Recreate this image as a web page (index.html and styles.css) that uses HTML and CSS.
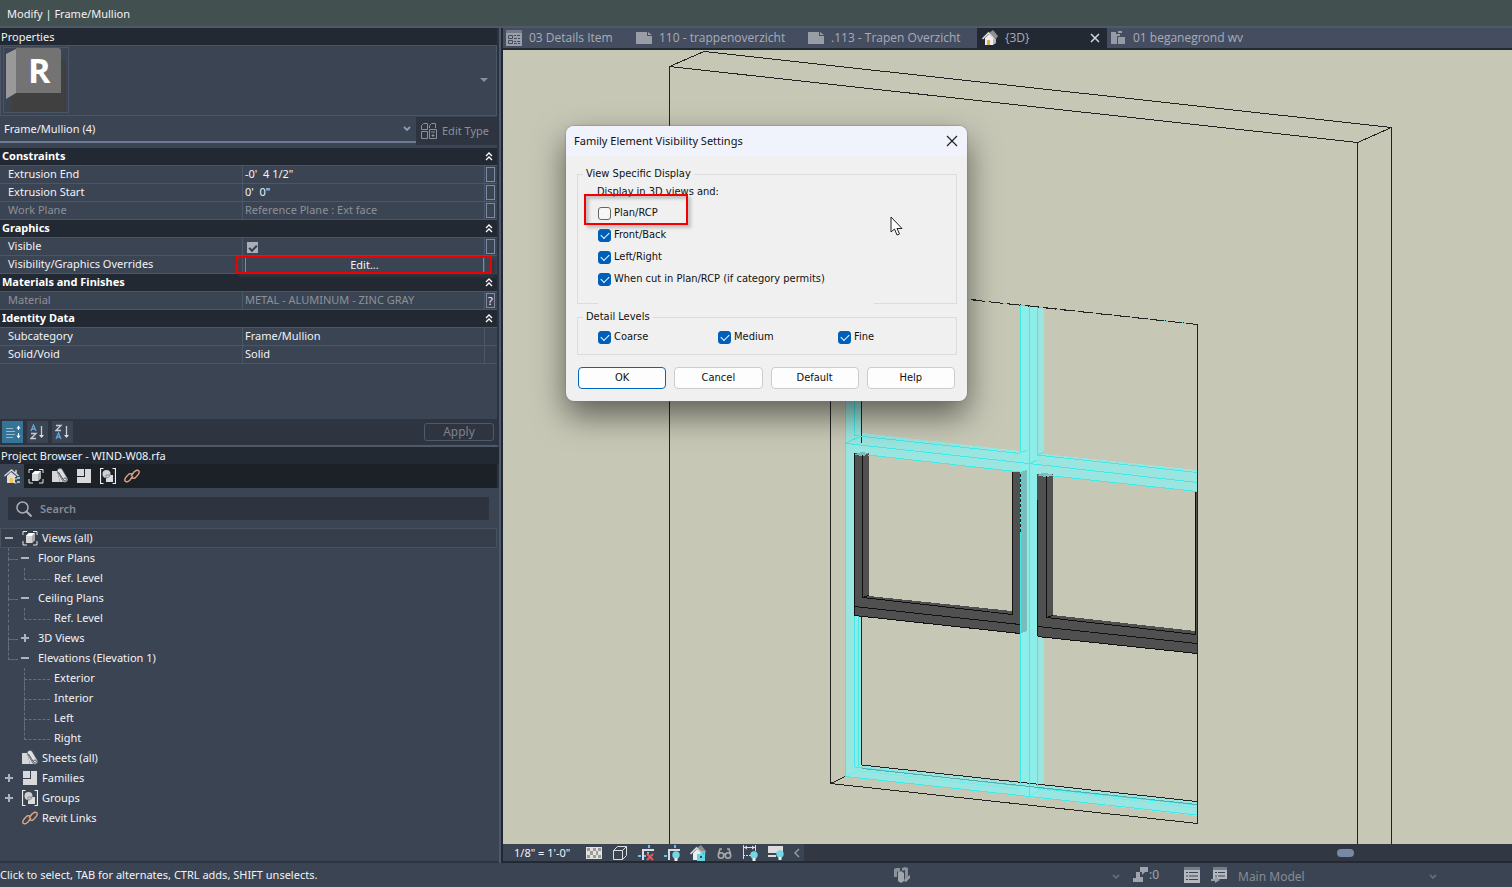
FILE: index.html
```html
<!DOCTYPE html>
<html lang="en">
<head>
<meta charset="utf-8">
<title>Modify | Frame/Mullion</title>
<link rel="stylesheet" href="styles.css">
</head>
<body>
<svg class="defs" aria-hidden="true">
  <symbol id="i-views" viewBox="0 0 16 16"><path d="M1 5V1.500h4M11 1.500h4V5M15 11v4h-4M5 15H1v-4" fill="none" stroke="#e6e6e6"/><path d="M4 5.500 7 3h6v7l-3 3H4z" fill="#d2d3d5"/><path d="M4 6 7 3h6l-3 3z" fill="#fff"/><path d="m10 6 3-3v7l-3 3z" fill="#a9abb0"/></symbol>
  <symbol id="i-sheets" viewBox="0 0 16 16"><path d="M0 3h5l3 11H0z" fill="#d6d6d8"/><path d="M5 3l3 11h5z" fill="#d6d6d8"/><path d="m8 3 5 8.500" stroke="#59626f" stroke-width="6" stroke-linecap="round"/><path d="m8 3 5 8.500" stroke="#dedede" stroke-width="4.500" stroke-linecap="round"/><path d="m6.500 4 5 8" stroke="#505966"/><circle cx="13" cy="11.500" r="1.500" fill="none" stroke="#555e6a"/></symbol>
  <symbol id="i-families" viewBox="0 0 16 16"><path d="M1 1h7v7H1zM9 1h6v14H1V9h8z" fill="#d9d9da"/></symbol>
  <symbol id="i-groups" viewBox="0 0 16 16"><path d="M3.500.5h-3v15h3M12.500.5h3v15h-3" fill="none" stroke="#eee" stroke-width="1.200"/><path d="M6 7h7v7H6z" fill="#dcdcdc"/><circle cx="6.500" cy="6" r="4" fill="#cfd0d2"/><path d="M6 7h4q0 2-3 3H6z" fill="none" stroke="#858c97"/></symbol>
  <symbol id="i-link" viewBox="0 0 16 16"><g fill="none" stroke="#d9a583" stroke-width="1.400"><path d="m7 8 3-4q3-3 5-1 1 2-2 5l-2 2q-2 1-4-.5"/><path d="m9 8-3 4q-3 3-5 1-1-2 2-5l2-2q2-1 4 .5"/></g></symbol>
  <symbol id="i-sheet" viewBox="0 0 16 12"><path d="M0 0h11v4h5v8H0zM12 0l4 3h-4z" fill="#999da6"/></symbol>
  <symbol id="i-house" viewBox="0 0 16 16"><path d="M3 8v7h8V8L7 4z" fill="#eee"/><path d="m11 8 3 1v4l-3 2z" fill="#b8b8b8"/><path d="m7 3 4-3 5 6-2 3-4-3z" fill="#8e8e8e"/><path d="m.5 9 6-6 6 6" fill="none" stroke="#d8d8d8" stroke-width="1.600"/></symbol>
  <symbol id="i-chev" viewBox="0 0 8 6"><path d="m1 1 3 3 3-3" fill="none" stroke="currentColor" stroke-width="1.800"/></symbol>
  <symbol id="i-up2" viewBox="0 0 8 10"><path d="m1 5 3-3 3 3M1 9l3-3 3 3" fill="none" stroke="#fff" stroke-width="1.300"/></symbol>
  <symbol id="i-bulb" viewBox="0 0 8 10"><circle cx="4" cy="4" r="3.700" fill="#72d7e6"/><path d="M2.500 7h3v3h-3z" fill="#eee"/></symbol>
</svg>

<header class="modebar">Modify | Frame/Mullion</header>

<main class="workspace">
  <aside class="side">
    <section class="properties">
      <h2 class="palette-title">Properties</h2>
      <div class="type-box">
        <svg class="type-logo" width="66" height="66" viewBox="0 0 66 66" aria-label="R">
          <rect x=".5" y=".5" width="65" height="65" fill="none" stroke="#4a5566"/>
          <path d="M9 12h54v53H9z" fill="#404040"/>
          <path d="M13 2v44L3 52V7z" fill="#999"/>
          <path d="M13 1h42q3 0 3 3v42H13z" fill="#737373"/>
          <text x="25" y="36" class="logo-letter">R</text>
        </svg>
        <svg class="drop-arrow" width="8" height="5"><path d="M0 0h8L4 4z" fill="#7f91a8"/></svg>
      </div>
      <div class="filter">
        <button class="combo"><span>Frame/Mullion (4)</span><svg width="8" height="6"><use href="#i-chev"/></svg></button>
        <button class="edit-type"><svg width="16" height="16" viewBox="0 0 16 16" fill="none" stroke="#8c9199"><path d="M.5 6.500v-4l2-2h4v6zM8.500 5V2.500l2-2h4V5M.5 15.500v-7h6v7zM8.500 6.500h7v9h-7zM10 9h4M12 11v3M10.500 12.500h3"/></svg><span>Edit Type</span></button>
      </div>
      <table class="props">
        <colgroup><col class="c-name"><col><col class="c-btn"></colgroup>
        <tbody>
          <tr class="group"><th colspan="2">Constraints</th><td><button aria-label="Collapse"><svg width="8" height="10"><use href="#i-up2"/></svg></button></td></tr>
          <tr><th>Extrusion End</th><td>-0'&nbsp; 4 1/2"</td><td><button class="assoc" aria-label="Associate"></button></td></tr>
          <tr><th>Extrusion Start</th><td>0'&nbsp; 0"</td><td><button class="assoc" aria-label="Associate"></button></td></tr>
          <tr class="off"><th>Work Plane</th><td>Reference Plane : Ext face</td><td><button class="assoc" aria-label="Associate"></button></td></tr>
          <tr class="group"><th colspan="2">Graphics</th><td><button aria-label="Collapse"><svg width="8" height="10"><use href="#i-up2"/></svg></button></td></tr>
          <tr><th><label for="visible">Visible</label></th><td><input type="checkbox" id="visible" class="tick" checked></td><td><button class="assoc" aria-label="Associate"></button></td></tr>
          <tr><th>Visibility/Graphics Overrides</th><td class="marked"><button class="edit">Edit...</button></td><td></td></tr>
          <tr class="group"><th colspan="2">Materials and Finishes</th><td><button aria-label="Collapse"><svg width="8" height="10"><use href="#i-up2"/></svg></button></td></tr>
          <tr class="off"><th>Material</th><td>METAL - ALUMINUM - ZINC GRAY</td><td><button class="assoc">?</button></td></tr>
          <tr class="group"><th colspan="2">Identity Data</th><td><button aria-label="Collapse"><svg width="8" height="10"><use href="#i-up2"/></svg></button></td></tr>
          <tr><th>Subcategory</th><td>Frame/Mullion</td><td></td></tr>
          <tr><th>Solid/Void</th><td>Solid</td><td></td></tr>
        </tbody>
      </table>
      <div class="sortbar">
        <button class="sort on" aria-label="Group"><svg width="16" height="16" viewBox="0 0 16 16"><path d="M1 4.500h7M1 7.500h9M1 10.500h9M1 13.500h7" stroke="#9ab8cb"/><path d="M13.500 2v4M13.500 9v5" stroke="#fff"/><path d="m11.500 4.500 2-3 2 3zM11.500 11.500l2 3 2-3z" fill="#fff"/></svg></button>
        <button class="sort" aria-label="Sort ascending"><svg width="16" height="16" viewBox="0 0 16 16" fill="none"><path d="m1 7 2.500-6L6 7M2 5h3" stroke="#65a5d6" stroke-width="1.300"/><path d="M1 9.500h5L1 14.500h5M11.500 2v11" stroke="#c8ccd2" stroke-width="1.300"/><path d="m9 11 2.500 3 2.500-3z" fill="#ddd"/></svg></button>
        <button class="sort" aria-label="Sort descending"><svg width="16" height="16" viewBox="0 0 16 16" fill="none"><path d="M1 1.500h5L1 6.500h5M11.500 2v11" stroke="#c8ccd2" stroke-width="1.300"/><path d="m1 15 2.500-6L6 15M2 13h3" stroke="#65a5d6" stroke-width="1.300"/><path d="m9 11 2.500 3 2.500-3z" fill="#ddd"/></svg></button>
        <button class="apply" disabled>Apply</button>
      </div>
    </section>

    <section class="browser">
      <h2 class="palette-title">Project Browser - WIND-W08.rfa</h2>
      <nav class="iconbar">
        <button class="on" aria-label="Home"><svg width="16" height="16" viewBox="0 0 16 16"><path d="M3 8v7h9V8L7 4z" fill="#ddd"/><path d="m.5 8 7-6 7 6M12 2v4" fill="none" stroke="#d8d8d8" stroke-width="1.500"/><path d="M6 10h3v5H6z" fill="#f2c65a"/><path d="M10 9v7h6V9z" fill="#3b4453"/><path d="M10.500 9v6h2M11 11h2" stroke="#ddd" fill="none"/><path d="M13 9h3v2h-3zM13 13h3v2h-3z" fill="#72c7f2"/></svg></button>
        <button aria-label="Views"><svg width="16" height="16"><use href="#i-views"/></svg></button>
        <button aria-label="Sheets"><svg width="16" height="16"><use href="#i-sheets"/></svg></button>
        <button aria-label="Families"><svg width="16" height="16"><use href="#i-families"/></svg></button>
        <button aria-label="Groups"><svg width="16" height="16"><use href="#i-groups"/></svg></button>
        <button aria-label="Links"><svg width="16" height="16"><use href="#i-link"/></svg></button>
      </nav>
      <label class="search"><svg width="16" height="16" viewBox="0 0 16 16" fill="none" stroke="#a9aeb8"><circle cx="6.500" cy="6.500" r="5.500" stroke-width="1.500"/><path d="m10.500 10.500 5 5" stroke-width="2"/></svg><input type="text" placeholder="Search" aria-label="Search"></label>
      <ul class="tree">
        <li><div class="node selected"><i class="tw minus"></i><svg width="16" height="16"><use href="#i-views"/></svg><span>Views (all)</span></div>
          <ul class="level1">
            <li><div class="node"><i class="tw minus"></i><span>Floor Plans</span></div><ul class="level2"><li><div class="node">Ref. Level</div></li></ul></li>
            <li><div class="node"><i class="tw minus"></i><span>Ceiling Plans</span></div><ul class="level2"><li><div class="node">Ref. Level</div></li></ul></li>
            <li><div class="node"><i class="tw plus"></i><span>3D Views</span></div></li>
            <li><div class="node"><i class="tw minus"></i><span>Elevations (Elevation 1)</span></div><ul class="level2"><li><div class="node">Exterior</div></li><li><div class="node">Interior</div></li><li><div class="node">Left</div></li><li><div class="node">Right</div></li></ul></li>
          </ul>
        </li>
        <li><div class="node"><i class="tw"></i><svg width="16" height="16"><use href="#i-sheets"/></svg><span>Sheets (all)</span></div></li>
        <li><div class="node"><i class="tw plus"></i><svg width="16" height="16"><use href="#i-families"/></svg><span>Families</span></div></li>
        <li><div class="node"><i class="tw plus"></i><svg width="16" height="16"><use href="#i-groups"/></svg><span>Groups</span></div></li>
        <li><div class="node"><i class="tw"></i><svg width="16" height="16"><use href="#i-link"/></svg><span>Revit Links</span></div></li>
      </ul>
    </section>
  </aside>

  <section class="viewer">
    <nav class="tabs">
      <button class="tab"><svg width="16" height="16" viewBox="0 0 16 16"><path d="M0 0h16v16H0z" fill="#9a9eaa"/><path d="M0 0h16v3H0z" fill="#777b84"/><path d="M2.500 5.500h4v3h-4zM2.500 10.500h4v3h-4zM8 5.500h2M11 5.500h3M8 8.500h3M12 8.500h2M8 11.500h2M11 11.500h3M8 13.500h3M12 13.500h2" fill="none" stroke="#454d5d"/></svg><span>03 Details Item</span></button>
      <button class="tab wide"><svg width="16" height="12"><use href="#i-sheet"/></svg><span>110 - trappenoverzicht</span></button>
      <button class="tab wide"><svg width="16" height="12"><use href="#i-sheet"/></svg><span>.113 - Trapen Overzicht</span></button>
      <div class="tab active"><svg width="16" height="16" viewBox="0 0 16 16"><use href="#i-house"/><path d="M5 10h3v5H5z" fill="#e2b13c"/></svg><span>{3D}</span><button class="close" aria-label="Close tab"><svg width="10" height="10"><path d="m1 1 8 8M9 1 1 9" stroke="#d4d7dc" stroke-width="1.500"/></svg></button></div>
      <button class="tab"><svg width="16" height="16" viewBox="0 0 16 16"><path d="M1 2h5v2h4v2H7v8H1zM8 1h4v2H8zM8 7h7v7H8z" fill="#969aa5"/></svg><span>01 beganegrond wv</span></button>
    </nav>

    <div class="canvas">
      <svg class="scene" viewBox="503 50 1009 794" preserveAspectRatio="xMinYMin slice" fill="none" shape-rendering="crispEdges">
        <g stroke="#222" stroke-width="1">
          <path d="M669.500 844V66.500L704 51.500 1391.500 127.500V844M669.500 66.500 1357.500 142.500V844M1357.500 142.500l34-15"/>
          <path d="M830.500 284V783.500L1197.500 823.500V324.500L830.500 284M830.500 783.500l15-7"/>
        </g>
        <g fill="#9ae5df">
          <path d="M845 300h17v465l335 37v14L845 776z"/>
          <path d="M1020 305l24 3v491l-24-3z"/>
          <path d="M845 431 1197 470v21L845 453z"/>
        </g>
        <path d="M862 300h158v151l-158-18zM862 455l158 17v311l-158-18zM1044 308l153 16v146l-153-16zM1044 475l153 16v310l-153-17z" fill="#c7c7b6"/>
        <path d="M1020 305l17 2v491l-17-2z" fill="#8deee9"/>
        <path d="M830.500 284.500 1197.500 324.500" stroke="#222"/>
        <g fill="#505050">
          <path d="M854 453h15v143l143 15V471h8v163l-166-19z"/>
          <path d="M1037 474h16v141l142 16V491h3v163l-160-18z"/>
        </g>
        <path d="M1020 472l7-2v161l-7 3zM854 455l7-3 8 1-5 3zM1037 476l5-3 11 1-5 3z" fill="#78bdbc"/>
        <g stroke="#111">
          <path d="M854.500 453V615.500L1020 633.500M862.500 455v142.500L1012.500 614.500V471M854 606.500 1020 624.500M862 597.500l7-2"/>
          <path d="M1037.500 500V636.500L1197 653.500M1046.500 476v141.500L1195.500 634.500V491M1038 626.500 1197 643.500M1046 617.500l7-2"/>
          <path d="M861.500 401v42M861.500 616V765L1197 801.500M1197.500 324v499M1020.500 472v60" stroke="#222"/>
        </g>
        <path d="M1020.500 472v60" stroke="#48eaea" stroke-dasharray="2 3"/>
        <g stroke="#43e8e8">
          <path d="M845.500 300V776.500L1029.500 796.500 1197 815M854.500 300V435M854.500 616v151L1020 786M858.500 616v151"/>
          <path d="M1020.500 305v148M1020.500 532v254M1029.500 306v490M1037.500 307v148M1037.500 636v152L1197 805"/>
          <path d="M854 435.500 1020 453.500M846 443.500 1033 464 1197 482.500M868 455 1020 472M1037 455 1197 472.500M1044 475 1197 491.500M846 443l15-7M1020 453l7-3M1037 455l7-3M1029 464l8-4"/>
          <path d="M861 771 1020 789M1037 789 1197 808M846 776l15-6M1029 796l14-7" stroke="#70eeee"/>
          <path d="M967 299.500 1197 324.500" stroke-dasharray="4 14"/>
        </g>
        <path d="M862 768.500 1197 804.500" stroke="#5aabac"/>
      </svg>

      <div class="dialog" role="dialog" aria-label="Family Element Visibility Settings">
        <div class="dialog-title"><span>Family Element Visibility Settings</span><button class="dialog-close" aria-label="Close"><svg width="12" height="12"><path d="m1 1 10 10M11 1 1 11" stroke="#222" stroke-width="1.200"/></svg></button></div>
        <div class="dialog-body">
          <fieldset class="views">
            <legend>View Specific Display</legend>
            <p>Display in 3D views and:</p>
            <label class="check first"><input type="checkbox">Plan/RCP</label>
            <label class="check"><input type="checkbox" checked>Front/Back</label>
            <label class="check"><input type="checkbox" checked>Left/Right</label>
            <label class="check"><input type="checkbox" checked>When cut in Plan/RCP (if category permits)</label>
            <div class="redbox"></div>
          </fieldset>
          <fieldset class="levels">
            <legend>Detail Levels</legend>
            <label class="check"><input type="checkbox" checked>Coarse</label>
            <label class="check"><input type="checkbox" checked>Medium</label>
            <label class="check"><input type="checkbox" checked>Fine</label>
          </fieldset>
          <div class="actions"><button class="primary">OK</button><button>Cancel</button><button>Default</button><button>Help</button></div>
        </div>
        <svg class="pointer" width="14" height="20" viewBox="0 0 14 20"><path d="M1 1v15l3.500-3 2.500 6 2.500-1-2.500-5.500H12z" fill="#fff" stroke="#222"/></svg>
      </div>
    </div>

    <div class="viewbar">
      <div class="viewtools">
        <button class="scale">1/8" = 1'-0"</button>
        <button aria-label="Detail level"><svg width="16" height="16" viewBox="0 0 16 16"><path d="M0 2h16v12H0z" fill="#e2e2e2"/><path d="M1 3h3v3H1zM7 3h3v3H7zM12 3h3v3h-3zM4 6h3v4H4zM10 6h2v4h-2zM1 10h3v3H1zM7 10h3v3H7zM12 10h3v3h-3z" fill="#9b9b9b"/></svg></button>
        <button aria-label="Visual style"><svg width="16" height="16" viewBox="0 0 16 16" fill="none" stroke="#ddd"><path d="M1.500 5.500h9v9h-9zM1.500 5.500l4-4h9v9l-4 4M10.500 5.500l4-4"/></svg></button>
        <button aria-label="Crop view"><svg width="16" height="16" viewBox="0 0 16 16" fill="none"><path d="M5 15V5h11" stroke="#ddd" stroke-width="2"/><path d="M0 11h3M11 0v3M10 7v2M6 11h2" stroke="#67c3f3" stroke-width="2"/><path d="m9 9 6 6M15 9l-6 6" stroke="#ee5558" stroke-width="2"/></svg></button>
        <button aria-label="Crop region"><svg width="16" height="16" viewBox="0 0 16 16" fill="none"><path d="M5 15V5h11" stroke="#ddd" stroke-width="2"/><path d="M0 11h3M11 0v3" stroke="#67c3f3" stroke-width="2"/><use href="#i-bulb" x="8" y="6" width="8" height="10"/></svg></button>
        <button aria-label="Lock view"><svg width="16" height="16" viewBox="0 0 16 16"><use href="#i-house"/><path d="M7 9h8v7H7z" fill="#62d4e3"/><path d="M11.500 10V7h3v3" fill="none" stroke="#62d4e3" stroke-width="1.500"/><path d="M10 11h2v2h-2z" fill="#3c4453"/></svg></button>
        <button aria-label="Temporary hide"><svg width="16" height="16" viewBox="0 0 16 16" fill="none" stroke="#aaa" stroke-width="1.600"><circle cx="5" cy="10.500" r="2.700"/><circle cx="12" cy="10.500" r="2.700"/><path d="M2.500 9 4 4h2M14.500 9 13 4h-2M7.500 9h2"/></svg></button>
        <button aria-label="Constraints"><svg width="16" height="16" viewBox="0 0 16 16" fill="none"><path d="M1.500 0v14M13.500 0v6M2 2.500h11" stroke="#ddd"/><path d="m2 2.500 3-2v4zM13 2.500l-3-2v4z" fill="#ddd"/><path d="M1 10.500h8" stroke="#ddd" stroke-dasharray="2 1"/><use href="#i-bulb" x="8" y="6" width="8" height="10"/></svg></button>
        <button aria-label="Worksets"><svg width="16" height="16" viewBox="0 0 16 16"><path d="M0 1h15v7H0zM0 10h8v2H0z" fill="#ddd"/><use href="#i-bulb" x="8" y="5" width="8" height="10"/></svg></button>
        <button class="less" aria-label="Collapse bar"><svg width="6" height="10"><path d="M5 1 1 5l4 4" fill="none" stroke="#969ba5" stroke-width="1.500"/></svg></button>
      </div>
      <div class="scrollbar"><i class="thumb"></i></div>
    </div>
  </section>
</main>

<footer class="status">
  <span class="hint">Click to select, TAB for alternates, CTRL adds, SHIFT unselects.</span>
  <svg width="16" height="16" viewBox="0 0 16 16"><path d="M0 2l2-1h4v10l-2 1V5L3 4v6H0z" fill="#8b919b"/><path d="m4 6 3-2 3 2v8l-3 2-3-2z" fill="#a2a6ae"/><path d="M8 1l3-1 3 1v8l-3 2V3L8 4z" fill="#8b919b"/><path d="m11 11 5-3v3l-4 4-2-1z" fill="#979ca5"/></svg>
  <svg class="dim" width="8" height="6"><use href="#i-chev"/></svg>
  <span class="requests"><svg width="16" height="16" viewBox="0 0 16 16"><path d="M7 1h8v5h-3L9 9V6H7zM3 6h4v5h3v5H0v-4h3z" fill="#a0a4ac"/></svg>:0</span>
  <svg class="opt1" width="16" height="16" viewBox="0 0 16 16"><path d="M0 0h16v16H0z" fill="#b5b8be"/><path d="M0 0h16v3H0z" fill="#777d87"/><path d="M2 5.500h2M5 5.500h9M2 9h2M5 9h9M2 12.500h2M5 12.500h9" stroke="#3b4453"/></svg>
  <svg class="opt2" width="16" height="16" viewBox="0 0 16 16"><path d="M2 0h14v12H2z" fill="#b5b8be"/><path d="M2 0h14v3H2z" fill="#777d87"/><path d="M4 5.500h2M7 5.500h7M4 9h2M7 9h7" stroke="#3b4453"/><path d="M0 12h4V9l5 4-5 3v-2H0z" fill="#9a9ea7"/></svg>
  <button class="model"><span>Main Model</span><svg width="8" height="6"><use href="#i-chev"/></svg></button>
</footer>
</body>
</html>
```
FILE: styles.css
```css
* { box-sizing: border-box; }
body {
  margin: 0; height: 100vh; display: flex; flex-direction: column; overflow: hidden;
  font: 11px/18px "Noto Sans", "Open Sans", sans-serif; color: #f2f3f5; background: #3b4453;
}
button, input { font: inherit; color: inherit; padding: 0; margin: 0; border: 0; background: none; }
svg { flex: none; display: block; }
ul { list-style: none; margin: 0; padding: 0; }
.defs { position: absolute; width: 0; height: 0; }

.modebar { height: 28px; padding: 0 7px; line-height: 27px; background: #435050; border-bottom: 2px solid #4e5a6a; }
.workspace { flex: 1; display: flex; min-height: 0; }
.side { width: 501px; display: flex; flex-direction: column; border-right: 2px solid #4d596a; }
.palette-title { margin: 0; height: 17px; padding: 0 1px; font-size: 11px; line-height: 17px; font-weight: 400; background: #222933; }

.properties { display: flex; flex-direction: column; height: 419px; border-bottom: 2px solid #4e5a6a; border-right: 2px solid #2c3340; }
.type-box { height: 71px; display: flex; justify-content: space-between; align-items: center; padding: 0 8px 0 2px; border: 1px solid #4a5566; }
.type-logo { margin-bottom: 1px; }
.logo-letter { font: 700 34px "Open Sans", sans-serif; fill: #fff; }
.filter { display: flex; height: 32px; padding: 1px 0 3px; }
.combo { flex: 1; display: flex; justify-content: space-between; align-items: center; height: 26px; padding: 0 5px 0 4px; border-bottom: 2px solid #6e7c94; }
.combo svg { color: #8c9bb4; }
.edit-type { width: 81px; display: flex; align-items: center; gap: 5px; padding-left: 5px; background: #2e3440; color: #8c9199; }

.props { width: 100%; table-layout: fixed; border-collapse: separate; border-spacing: 0; }
.c-name { width: 242px; }
.c-btn { width: 13px; }
.props tr { height: 18px; }
.props th, .props td { padding: 0; height: 18px; line-height: 16px; border: 0 solid #4b5668; border-bottom-width: 1px; border-left-width: 1px; white-space: nowrap; text-align: left; vertical-align: top; font-weight: 400; }
.props th { padding-left: 8px; border-left: 0; }
.props td { padding-left: 2px; }
.props td:last-child { padding-left: 1px; }
.props .group th, .props .group td { border-left: 0; background: #222933; font-weight: 700; color: #fff; }
.props .group th { padding-left: 2px; }
.props .group button { display: block; margin-top: 3px; }
.off { color: #8c9199; }
.assoc { display: block; width: 9px; height: 15px; margin-top: 1px; border: 1px solid #7c8ba3; line-height: 13px; text-align: center; color: #fff; }
.tick { appearance: none; display: block; width: 11px; height: 11px; margin: 4px 0 0 2px; background: #a9aeb8; }
.tick:checked::after { content: ""; display: block; width: 6px; height: 3px; margin: 3px 0 0 2px; border: solid #343c49; border-width: 0 0 2px 2px; rotate: -45deg; }
.marked { position: relative; }
.marked::after { content: ""; position: absolute; left: -7px; right: -8px; top: 0; bottom: -1px; border: 2px solid #f20000; box-shadow: 3px 3px 3px #303640; pointer-events: none; }
.edit { width: 100%; height: 14px; margin-top: 2px; display: block; line-height: 14px; border: solid #7c8ba3; border-width: 0 1px; }

.sortbar { margin-top: auto; height: 26px; display: flex; align-items: center; gap: 4px; padding: 0 3px 0 2px; background: #2e3440; }
.sort { width: 21px; height: 22px; display: grid; place-items: center; background: #3b4453; }
.sort.on { background: #347497; }
.apply { margin-left: auto; width: 70px; height: 18px; border: 1px solid #4e5a6c; border-radius: 3px; font-size: 12px; line-height: 16px; color: #7c828c; }

.browser { flex: 1; display: flex; flex-direction: column; border-bottom: 2px solid #2e3541; }
.iconbar { display: flex; height: 24px; background: #1c2027; border-right: 2px solid #2c3340; }
.iconbar button { width: 24px; display: grid; place-items: center; }
.iconbar .on { background: #3b4453; }
.search { display: flex; align-items: center; gap: 8px; height: 23px; margin: 9px 10px 8px 8px; padding-left: 8px; background: #2d343f; }
.search input { flex: 1; outline: 0; font-weight: 600; }
.search input::placeholder { color: #858c98; }
.node { height: 20px; line-height: 20px; display: flex; align-items: center; gap: 4px; padding-left: 4px; }
.selected { margin-right: 2px; background: #363e4b; box-shadow: inset 0 0 0 1px #475263; }
.tw { width: 9px; height: 9px; margin-right: 5px; background: no-repeat center / 8px 2px; }
.minus, .plus { background-image: linear-gradient(#aeb4be, #aeb4be); }
.plus { background-image: linear-gradient(#aeb4be, #aeb4be), linear-gradient(#aeb4be, #aeb4be); background-size: 8px 2px, 2px 8px; }
.level1 .node { padding-left: 20px; }
.level2 .node { padding-left: 54px; }
.level1 li { position: relative; }
.level1 > li::before, .level2 > li::before { content: ""; position: absolute; left: 8px; top: 0; width: 9px; height: 11px; border: dashed #657078; border-width: 0 0 1px 1px; }
.level1 > li:not(:last-child)::after, .level2 > li:not(:last-child)::after { content: ""; position: absolute; left: 8px; top: 10px; bottom: 0; border-left: 1px dashed #657078; }
.level2 > li::before { left: 24px; width: 25px; }
.level2 > li:not(:last-child)::after { left: 24px; }

.viewer { flex: 1; min-width: 0; display: flex; flex-direction: column; border-left: 2px solid #222933; border-bottom: 2px solid #222933; }
.tabs { display: flex; height: 22px; background: #454e60; border-bottom: 2px solid #222933; color: #a7acb7; font-family: "Open Sans", sans-serif; font-size: 12px; }
.tab { display: flex; align-items: center; gap: 7px; width: 130px; padding-left: 3px; text-align: left; white-space: nowrap; }
.wide { width: 172px; }
.tab:last-child { width: 160px; }
.active { background: #222933; padding: 0 7px 0 5px; }
.close { margin-left: auto; }
.canvas { position: relative; flex: 1; min-height: 0; overflow: hidden; background: #c7c7b6; }
.scene { width: 100%; height: 100%; }

.dialog { position: absolute; left: 63px; top: 76px; width: 401px; border-radius: 8px; background: #f0f0f0; color: #111; box-shadow: 0 0 1px 1px #7776, 0 14px 32px #0008; }
.dialog-title { display: flex; justify-content: space-between; align-items: center; height: 30px; padding: 0 9px 0 8px; border-radius: 8px 8px 0 0; background: #f0f3fb; }
.dialog-body { padding: 10px 10px 12px 11px; font-family: "DejaVu Sans Condensed", "Open Sans", sans-serif; line-height: 16px; }
fieldset { position: relative; min-width: 0; margin: 0; padding: 0 0 0 20px; border: 1px solid #dcdcdc; }
legend { margin-left: -15px; padding: 0 3px; }
.views { height: 138px; }
.views::after { content: ""; position: absolute; left: 20px; right: 82px; bottom: -1px; height: 1px; background: #f0f0f0; }
.views p { margin: 2px 0 2px -1px; }
.views .check { height: 22px; }
.check { display: flex; align-items: center; gap: 3px; }
.check input { appearance: none; flex: none; width: 13px; height: 13px; border: 1px solid #666; border-radius: 3px; background: #f6f6f6; }
.check input:checked { border-color: #005fb8; background: #005fb8; }
.check input:checked::after { content: ""; display: block; width: 7px; height: 4px; margin: 2px 0 0 2px; border: solid #fff; border-width: 0 0 1px 1px; rotate: -45deg; }
.redbox { position: absolute; left: 6px; top: 12px; width: 104px; height: 31px; border: 2px solid #f20000; box-shadow: 3px 3px 3px #9998, inset 3px 3px 3px #9998; }
.levels { display: grid; grid-template-columns: 120px 120px 1fr; height: 46px; margin-top: 5px; padding-top: 4px; align-content: start; }
.actions { display: flex; gap: 8px; margin: 12px 2px 0 1px; }
.actions button { flex: 1; height: 22px; line-height: 20px; border: 1px solid #ccc; border-radius: 4px; background: #fdfdfd; }
.actions .primary { border-color: #0067c0; }
.pointer { position: absolute; left: 324px; top: 90px; }

.viewbar { display: flex; height: 17px; background: #313743; }
.viewtools { display: flex; align-items: center; gap: 10px; padding-left: 11px; background: #3b4453; }
.scale { width: 62px; text-align: left; white-space: nowrap; }
.less { padding: 4px 4px 3px 0; }
.scrollbar { flex: 1; display: flex; align-items: center; justify-content: flex-end; padding-right: 158px; }
.thumb { width: 17px; height: 8px; border-radius: 4px; background: #7789a3; }

.status { display: flex; align-items: center; height: 24px; background: #3b4453; color: #a0a4ac; }
.hint { flex: 1; color: #f2f3f5; }
.dim { margin: 4px 13px 0 202px; color: #5d6b80; }
.requests { display: flex; width: 51px; font-size: 12px; }
.opt2 { margin: 0 11px; }
.model { display: flex; align-items: center; justify-content: space-between; width: 199px; margin-right: 75px; padding-top: 4px; font-size: 12px; color: #858b96; }
.model svg { color: #5d6b80; }
```
